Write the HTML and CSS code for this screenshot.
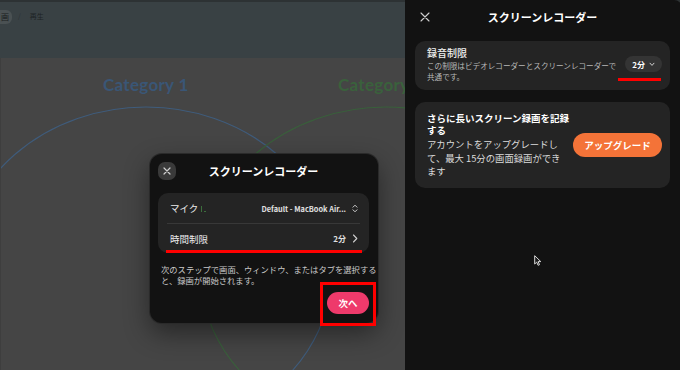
FILE: index.html
```html
<!DOCTYPE html>
<html lang="ja">
<head>
<meta charset="utf-8">
<title>スクリーンレコーダー</title>
<link rel="stylesheet" href="styles.css">
</head>
<body>
<div class="screen">
  <section class="app">
    <header class="toolbar">
      <span class="tab">画</span><span class="sep">/</span><span class="crumb">再生</span>
    </header>
    <div class="canvas">
      <svg class="venn" width="405" height="312" viewBox="0 0 405 312">
        <ellipse cx="145" cy="212" rx="186" ry="163" fill="none" stroke="#3f5c7c" stroke-width="1.1"/>
        <ellipse cx="385" cy="212" rx="186" ry="163" fill="none" stroke="#39603b" stroke-width="1.1"/>
      </svg>
      <span class="cat cat-1">Category 1</span>
      <span class="cat cat-2">Category 2</span>

      <div class="modal">
        <div class="modal-head">
          <button class="close-btn" aria-label="閉じる">
            <svg width="8" height="8" viewBox="0 0 8 8"><path d="M1 1 L7 7 M7 1 L1 7" stroke="#d0d0d0" stroke-width="1.2" stroke-linecap="round"/></svg>
          </button>
          <h2 class="modal-title">スクリーンレコーダー</h2>
          <span></span>
        </div>
        <div class="settings">
          <div class="row">
            <span class="label">マイク<span class="level"><i class="bar"></i><i class="dot"></i></span></span>
            <span class="value latin">Default - MacBook Air...
              <svg width="6" height="9" viewBox="0 0 6 9"><path d="M1 3.2 L3 1.2 L5 3.2 M1 5.8 L3 7.8 L5 5.8" fill="none" stroke="#cfcfcf" stroke-width="1" stroke-linecap="round" stroke-linejoin="round"/></svg>
            </span>
          </div>
          <div class="divider"></div>
          <div class="row">
            <span class="label">時間制限</span>
            <span class="value">2分
              <svg width="6" height="9" viewBox="0 0 6 9"><path d="M1.5 1 L4.8 4.5 L1.5 8" fill="none" stroke="#cfcfcf" stroke-width="1.1" stroke-linecap="round" stroke-linejoin="round"/></svg>
            </span>
          </div>
        </div>
        <p class="desc">次のステップで画面、ウィンドウ、またはタブを選択すると、録画が開始されます。</p>
        <div class="modal-foot">
          <button class="next-btn">次へ</button>
        </div>
      </div>
    </div>
  </section>

  <aside class="panel">
    <header class="panel-head">
      <span class="panel-close">
        <svg width="10" height="10" viewBox="0 0 10 10"><path d="M1 1 L9 9 M9 1 L1 9" stroke="#cfcfcf" stroke-width="1.1" stroke-linecap="round"/></svg>
      </span>
      <h2 class="panel-title">スクリーンレコーダー</h2>
      <span></span>
    </header>
    <div class="card limit-card">
      <div class="limit-text">
        <div class="limit-title">録音制限</div>
        <div class="limit-sub">この制限はビデオレコーダーとスクリーンレコーダーで共通です。</div>
      </div>
      <span class="pill">2分
        <svg width="6" height="5" viewBox="0 0 6 5"><path d="M1 1.2 L3 3.4 L5 1.2" fill="none" stroke="#d0d0d0" stroke-width="1" stroke-linecap="round" stroke-linejoin="round"/></svg>
      </span>
    </div>
    <div class="card upsell-card">
      <div class="upsell-text">
        <div class="upsell-title">さらに長いスクリーン録画を記録する</div>
        <div class="upsell-body">アカウントをアップグレードして、最大 15分の画面録画ができます</div>
      </div>
      <button class="upgrade-btn">アップグレード</button>
    </div>
  </aside>

  <span class="mark mark-time"></span>
  <span class="mark mark-pill"></span>
  <span class="mark-box"></span>
  <svg class="cursor" width="8" height="12" viewBox="0 0 8 12"><path d="M0.7 0.7 L0.7 9 L2.7 7.1 L4.1 10.3 L5.5 9.7 L4.1 6.6 L6.8 6.6 Z" fill="#1a1a1a" stroke="#d8d8d8" stroke-width="1" stroke-linejoin="round"/></svg>
</div>
</body>
</html>
```
FILE: styles.css
```css
* { box-sizing: border-box; }
html, body { margin: 0; padding: 0; }
body {
  background: #2e3334;
  font-family: "Noto Sans CJK JP", "Noto Sans", sans-serif;
  color: #fff;
}
button { font-family: inherit; border: 0; padding: 0; cursor: pointer; }
h2 { margin: 0; }
p { margin: 0; }

.screen {
  position: relative;
  display: flex;
  width: 680px;
  height: 370px;
  overflow: hidden;
}

/* left app (dimmed) */
.app {
  width: 405px;
  flex: none;
  display: flex;
  flex-direction: column;
}
.toolbar {
  height: 58px;
  background: #394144;
  border-top: 2px solid #2d3234;
  display: flex;
  align-items: flex-start;
  padding-top: 8px;
  font-size: 7px;
  line-height: 13px;
  color: #1e2325;
}
.tab {
  background: #4a5153;
  border-radius: 0 6px 6px 0;
  padding: 0 3px 0 1px;
  height: 14px;
  line-height: 14px;
  font-size: 8px;
  color: #1a1e20;
}
.sep { margin-left: 6px; color: #2c3234; }
.crumb { margin-left: 9px; }

.canvas {
  position: relative;
  flex: 1;
  overflow: hidden;
  background: #454545;
  border-left: 1px solid #3e3e3e;
}
.venn { position: absolute; left: 0; top: 0; }
.cat {
  position: absolute;
  top: 18px;
  font-family: "Lato", sans-serif;
  font-weight: 700;
  font-size: 17px;
  line-height: 18px;
  letter-spacing: 0.3px;
  white-space: nowrap;
}
.cat-1 { left: 102px; color: #3a5676; }
.cat-2 { left: 337px; color: #3a613c; }

/* modal */
.modal {
  position: absolute;
  left: 149px;
  top: 96px;
  width: 228px;
  height: 169px;
  background: #121212;
  border-radius: 12px;
  box-shadow: 0 0 0 1px #2a2a2a, 0 10px 26px rgba(0,0,0,0.45);
  display: flex;
  flex-direction: column;
  padding: 8px 9px 9px 8px;
}
.modal-head {
  display: grid;
  grid-template-columns: 18px 1fr 18px;
  align-items: center;
  height: 18px;
}
.close-btn {
  width: 18px;
  height: 18px;
  border-radius: 7px;
  background: #3a3a3a;
  display: flex;
  align-items: center;
  justify-content: center;
}
.modal-title {
  text-align: center;
  font-size: 11px;
  font-weight: 700;
  line-height: 18px;
  color: #fff;
}
.settings {
  margin-top: 13px;
  background: #242424;
  border-radius: 10px;
}
.row {
  height: 30px;
  display: flex;
  align-items: center;
  justify-content: space-between;
  padding: 0 11px 0 12px;
}
.row + .divider + .row { height: 29px; }
.label {
  font-size: 9.5px;
  color: #ececec;
  display: flex;
  align-items: center;
}
.level { display: inline-flex; align-items: flex-end; gap: 2px; margin-left: 3px; height: 8px; }
.level .bar { display: block; width: 1px; height: 6px; background: #3c6e3c; }
.level .dot { display: block; width: 1.5px; height: 1.5px; background: #3c6e3c; }
.value {
  display: flex;
  align-items: center;
  gap: 6px;
  font-size: 8px;
  font-weight: 700;
  color: #e0e0e0;
}
.value.latin { font-size: 7.4px; }
.divider { height: 1px; background: #383838; margin: 0 9px; }
.desc {
  flex: none;
  width: 220px;
  margin: 11px 0 0 3px;
  font-size: 8.3px;
  line-height: 11px;
  color: #c9c9c9;
}
.modal-foot {
  margin-top: auto;
  display: flex;
  justify-content: flex-end;
}
.next-btn {
  width: 42px;
  height: 22px;
  border-radius: 11px;
  background: #ee3a6b;
  color: #fff;
  font-size: 9.5px;
  font-weight: 700;
}

/* right panel */
.panel {
  flex: 1;
  background: #121212;
  border-radius: 0 8px 0 0;
  padding: 0 12px 0 10px;
}
.panel-head {
  height: 34px;
  display: grid;
  grid-template-columns: 20px 1fr 20px;
  align-items: center;
}
.panel-close { display: flex; padding-left: 5px; }
.panel-title {
  text-align: center;
  font-size: 11px;
  font-weight: 700;
  color: #fff;
}
.card {
  background: #242424;
  border-radius: 10px;
  display: flex;
  align-items: center;
}
.limit-card {
  margin-top: 7px;
  padding: 5px 8px 8px 12px;
  gap: 3px;
}
.limit-text { flex: 1; min-width: 0; }
.limit-title {
  font-size: 10px;
  line-height: 14px;
  font-weight: 500;
  color: #f0f0f0;
}
.limit-sub {
  font-size: 7.6px;
  line-height: 11px;
  color: #b8b8b8;
}
.pill {
  flex: none;
  height: 16px;
  padding: 0 7px;
  border-radius: 8px;
  background: #343434;
  display: flex;
  align-items: center;
  gap: 4px;
  font-size: 8px;
  font-weight: 700;
  color: #fff;
}
.upsell-card {
  margin-top: 12px;
  padding: 10px 8px 9px 12px;
  justify-content: space-between;
}
.upsell-text { width: 146px; flex: none; }
.upsell-title {
  font-size: 9.5px;
  line-height: 12px;
  font-weight: 700;
  color: #fff;
}
.upsell-body {
  margin-top: 2px;
  width: 138px;
  font-size: 9.35px;
  line-height: 13.5px;
  color: #dcdcdc;
}
.upgrade-btn {
  flex: none;
  width: 89px;
  height: 24px;
  border-radius: 12px;
  background: #f47338;
  color: #fff;
  font-size: 9.5px;
  font-weight: 700;
}

/* annotations & overlay */
.mark { position: absolute; background: #ff0000; }
.mark-time { left: 166px; top: 250px; width: 196px; height: 3px; }
.mark-pill { left: 618px; top: 78px; width: 43px; height: 2.5px; }
.mark-box {
  position: absolute;
  left: 320px;
  top: 282px;
  width: 56px;
  height: 44px;
  border: 3px solid #ff0000;
}
.cursor { position: absolute; left: 534px; top: 255px; }
```
